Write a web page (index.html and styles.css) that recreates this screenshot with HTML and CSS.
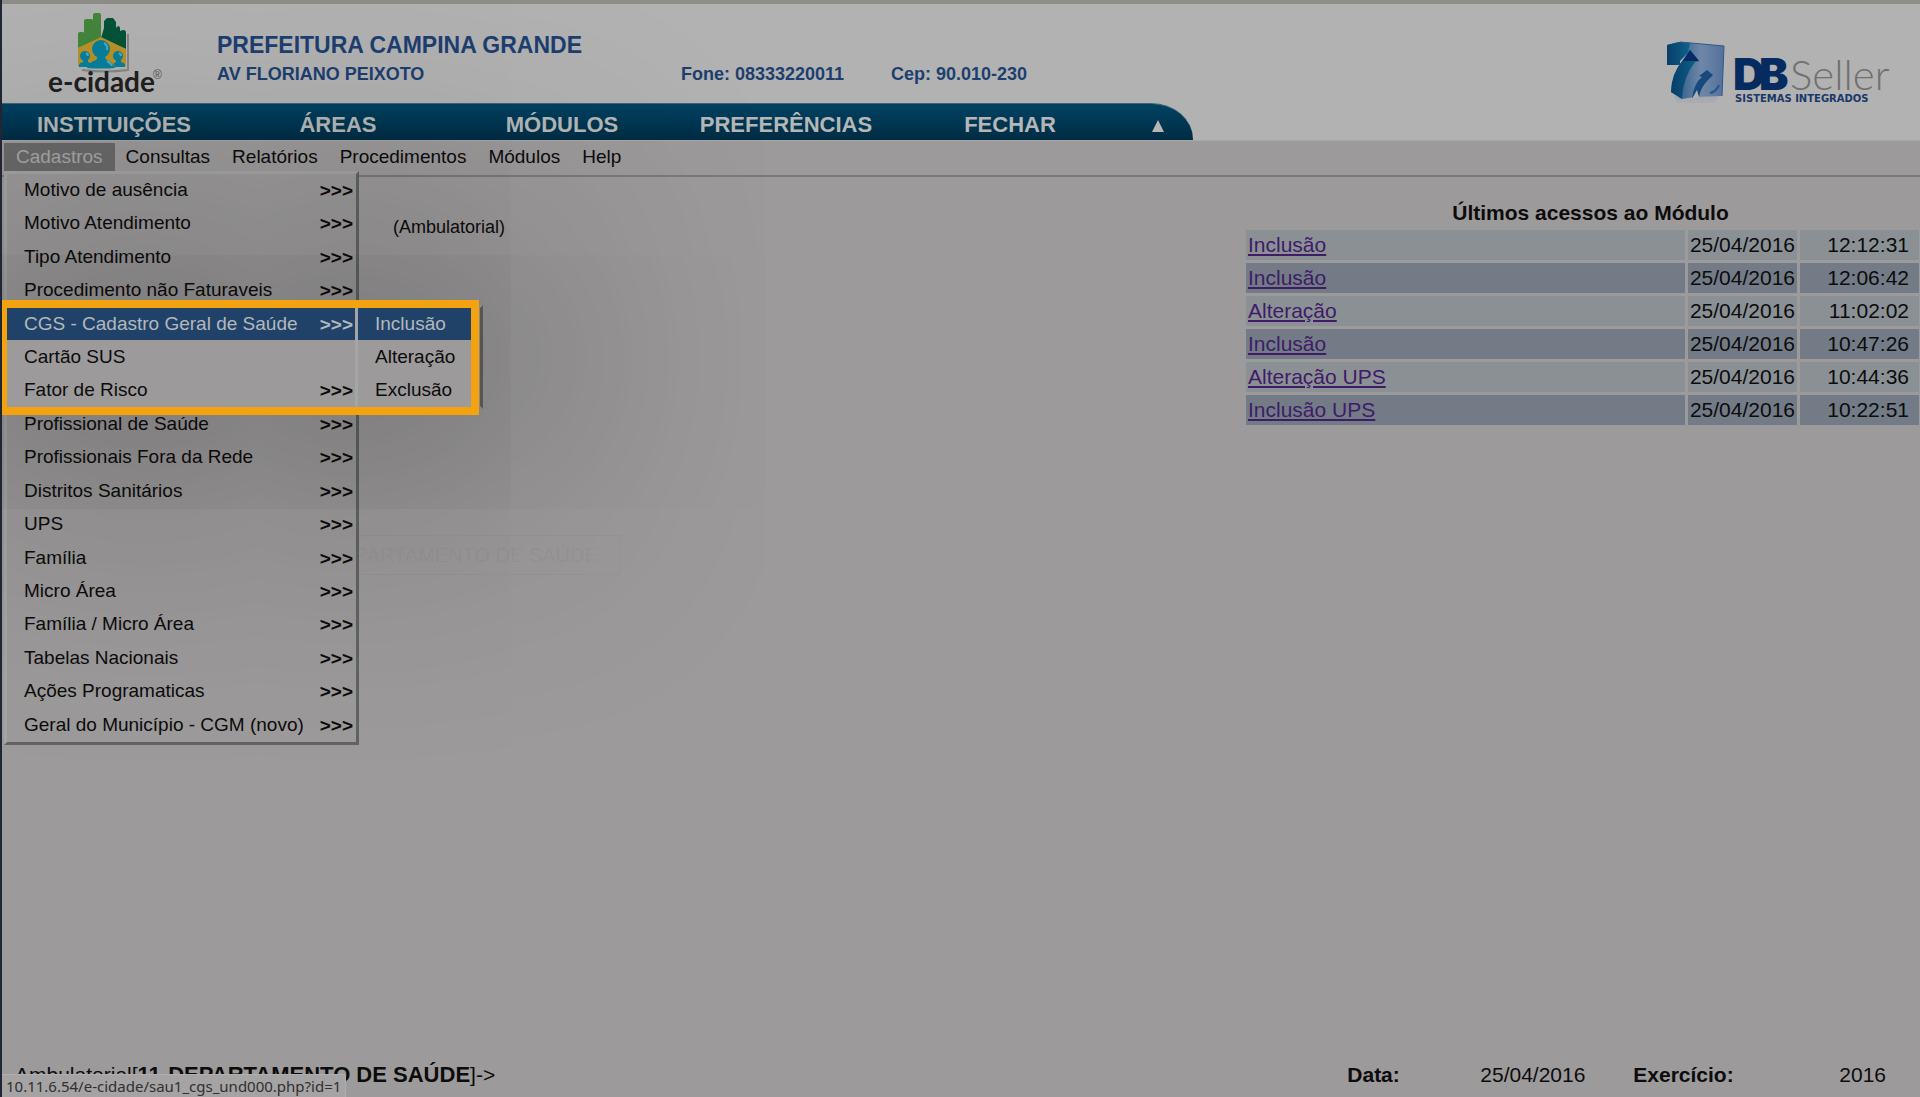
FILE: index.html
```html
<!DOCTYPE html>
<html lang="pt-BR">
<head>
<meta charset="utf-8">
<title>e-cidade</title>
<link rel="stylesheet" href="styles.css">
</head>
<body>
<header class="header">
  <svg class="logo" width="122" height="92" viewBox="0 0 122 92" role="img" aria-label="e-cidade">
    <path d="M34 60q24 3 46 0V24" fill="none" stroke="#55585a" stroke-width="2" opacity=".5"/>
    <path d="M53 28V5q0-2-2-2h-4q-2 0-2 2v5q0-1-2-1h-5q-2 0-2 2v12q0-1-2-1h-2q-2 0-2 2v14z" fill="#43863b"/>
    <path d="M53 28 56 18V11l3-3h6l3 4v6q3-4 4 0v3q6-3 6 2v16z" fill="#065338"/>
    <path d="M30 56V38l23-11 25 12v17q-24 4-48 0z" fill="#b99226"/>
    <g fill="#087f9d">
      <circle cx="53" cy="39" r="9"/>
      <path d="M39 58q2-6 9-8 2-2 1-5h9q-2 3 1 5 6 2 8 8-14 1-28 0z"/>
      <circle cx="37" cy="46" r="5"/>
      <path d="M31 57q-1-4 4-5v-4h5v4q4 1 2 5z"/>
      <circle cx="70" cy="46" r="5"/>
      <path d="M77 57q1-4-4-5v-4h-5v4q-4 1-1 5z"/>
    </g>
    <path d="M56 33q4 2 3 7M38 43q2 1 2 3M71 43q2 1 2 3M59 51q4 2 5 5" fill="none" stroke="#55a6bd" stroke-width="2"/>
    <text class="logo-name" x="0" y="82">e-cidade</text>
    <text class="logo-mark" x="105" y="69">®</text>
  </svg>
  <div class="entity">
    <h1 class="entity-name">PREFEITURA CAMPINA GRANDE</h1>
    <p class="entity-line"><span class="address">AV FLORIANO PEIXOTO</span><span class="phone">Fone: 08333220011</span><span>Cep: 90.010-230</span></p>
  </div>
  <svg class="vendor" width="228" height="76" viewBox="0 0 228 76" role="img" aria-label="DBSeller Sistemas Integrados">
    <defs>
      <linearGradient id="face" x1="0" y1="0" x2="1" y2="0"><stop offset="0" stop-color="#164c82"/><stop offset=".6" stop-color="#6f88a8"/><stop offset="1" stop-color="#54709a"/></linearGradient>
      <linearGradient id="side" x1="0" y1="0" x2="1" y2="0"><stop offset="0" stop-color="#073e69"/><stop offset="1" stop-color="#0e638a"/></linearGradient>
      <linearGradient id="fade" x1="0" y1="0" x2="0" y2="1"><stop offset="0" stop-color="#9ba2b0"/><stop offset="1" stop-color="#b2b2b2"/></linearGradient>
    </defs>
    <path d="M8 56h44l-4 10-10 2-4 4-20-2z" fill="url(#fade)" opacity=".6"/>
    <path d="M1 5 13 2 58 6 56 56 28 57 16 59 5 52Q6 38 14 24L1 25z" fill="url(#face)"/>
    <path d="M1 5 13 2 24 3 22 13 14 25 1 25z" fill="url(#side)"/>
    <path d="M14 24 17 20 22 13 14 21z" fill="#b2b2b2"/>
    <path d="M5 52Q5 34 17 20L24 10 33 21 29 22Q17 37 16 59z" fill="url(#side)"/>
    <path d="M17 21 24 10 33 21z" fill="#062a66"/>
    <path d="M26 59Q28 43 36 37L33 36 41 30 47 35 44 38Q35 46 33 57l-3-4z" fill="#17497c"/>
    <path d="M26 59 31 50 33 57z" fill="#b2b2b2"/>
    <path d="M44 53Q50 52 53 45" fill="none" stroke="#25568b" stroke-width="2"/>
    <path d="M14 2 58 6 56 56" fill="none" stroke="#315887"/>
    <text class="vendor-db" x="67" y="50">D</text>
    <text class="vendor-db" x="93" y="50">B</text>
    <text class="vendor-seller" x="124" y="50">Seller</text>
    <text class="vendor-tag" x="69" y="62">SISTEMAS INTEGRADOS</text>
  </svg>
</header>

<div class="navrow">
  <nav class="mainnav">
    <a href="#">INSTITUIÇÕES</a>
    <a href="#">ÁREAS</a>
    <a href="#">MÓDULOS</a>
    <a href="#">PREFERÊNCIAS</a>
    <a href="#">FECHAR</a>
    <button class="collapse" type="button" aria-label="Recolher"><svg width="12" height="12" viewBox="0 0 12 12"><path d="M6 0 12 12H0z" fill="#b5b7b7"/></svg></button>
  </nav>
</div>

<div class="menubar">
  <div class="menuhost">
    <button class="menubtn open" type="button">Cadastros</button>
    <ul class="dropdown">
      <li><a href="#">Motivo de ausência <b>&gt;&gt;&gt;</b></a></li>
      <li><a href="#">Motivo Atendimento <b>&gt;&gt;&gt;</b></a></li>
      <li><a href="#">Tipo Atendimento <b>&gt;&gt;&gt;</b></a></li>
      <li><a href="#">Procedimento não Faturaveis <b>&gt;&gt;&gt;</b></a></li>
      <li class="active"><a href="#">CGS - Cadastro Geral de Saúde <b>&gt;&gt;&gt;</b></a>
        <ul class="submenu">
          <li class="active"><a href="#">Inclusão</a></li>
          <li><a href="#">Alteração</a></li>
          <li><a href="#">Exclusão</a></li>
        </ul>
        <div class="highlight"></div>
      </li>
      <li><a href="#">Cartão SUS</a></li>
      <li><a href="#">Fator de Risco <b>&gt;&gt;&gt;</b></a></li>
      <li><a href="#">Profissional de Saúde <b>&gt;&gt;&gt;</b></a></li>
      <li><a href="#">Profissionais Fora da Rede <b>&gt;&gt;&gt;</b></a></li>
      <li><a href="#">Distritos Sanitários <b>&gt;&gt;&gt;</b></a></li>
      <li><a href="#">UPS <b>&gt;&gt;&gt;</b></a></li>
      <li><a href="#">Família <b>&gt;&gt;&gt;</b></a></li>
      <li><a href="#">Micro Área <b>&gt;&gt;&gt;</b></a></li>
      <li><a href="#">Família / Micro Área <b>&gt;&gt;&gt;</b></a></li>
      <li><a href="#">Tabelas Nacionais <b>&gt;&gt;&gt;</b></a></li>
      <li><a href="#">Ações Programaticas <b>&gt;&gt;&gt;</b></a></li>
      <li><a href="#">Geral do Município - CGM (novo) <b>&gt;&gt;&gt;</b></a></li>
    </ul>
  </div>
  <button class="menubtn" type="button">Consultas</button>
  <button class="menubtn" type="button">Relatórios</button>
  <button class="menubtn" type="button">Procedimentos</button>
  <button class="menubtn" type="button">Módulos</button>
  <button class="menubtn" type="button">Help</button>
</div>

<main class="content">
  <div>
    <p class="module">(Ambulatorial)</p>
    <select class="department" aria-label="Departamento"><option>DEPARTAMENTO DE SAÚDE</option></select>
  </div>
  <table class="recent">
    <caption>Últimos acessos ao Módulo</caption>
    <tbody>
      <tr><td><a href="#">Inclusão</a></td><td class="date">25/04/2016</td><td class="time">12:12:31</td></tr>
      <tr><td><a href="#">Inclusão</a></td><td class="date">25/04/2016</td><td class="time">12:06:42</td></tr>
      <tr><td><a href="#">Alteração</a></td><td class="date">25/04/2016</td><td class="time">11:02:02</td></tr>
      <tr><td><a href="#">Inclusão</a></td><td class="date">25/04/2016</td><td class="time">10:47:26</td></tr>
      <tr><td><a href="#">Alteração UPS</a></td><td class="date">25/04/2016</td><td class="time">10:44:36</td></tr>
      <tr><td><a href="#">Inclusão UPS</a></td><td class="date">25/04/2016</td><td class="time">10:22:51</td></tr>
    </tbody>
  </table>
</main>

<footer class="footer">
  <p class="path">Ambulatorial[<b>11-DEPARTAMENTO DE SAÚDE</b>]-&gt;</p>
  <b class="label-date">Data:</b><span class="value-date">25/04/2016</span>
  <b class="label-year">Exercício:</b><span>2016</span>
</footer>
<div class="status">10.11.6.54/e-cidade/sau1_cgs_und000.php?id=1</div>
</body>
</html>
```
FILE: styles.css
```css
* { box-sizing: border-box; }

body {
  margin: 0;
  min-height: 100vh;
  display: flex;
  flex-direction: column;
  overflow-x: hidden;
  border-left: 2px solid #202634;
  background: #9c9a9a;
  color: #0c0c0c;
  font: 21px/24px "Liberation Sans", Arial, sans-serif;
}

h1, p, ul { margin: 0; padding: 0; }
ul { list-style: none; }
a { color: inherit; text-decoration: none; }
button { font: inherit; color: inherit; border: 0; background: none; padding: 0; }
svg { overflow: visible; }

/* Header */
.header {
  display: flex;
  align-items: flex-start;
  height: 103px;
  padding: 6px 26px 0 46px;
  border-top: 4px solid #8e8d8a;
  background: #b2b2b2;
}
.logo-name { font: 700 28px Lato, sans-serif; fill: #202020; }
.logo-mark { font: 12px "Liberation Sans", sans-serif; fill: #555; }
.entity { flex: 1; padding: 22px 0 0 47px; color: #1d3f70; font-weight: bold; }
.entity-name { font-size: 23px; line-height: 26px; }
.entity-line { display: flex; margin-top: 4px; font-size: 18px; line-height: 24px; }
.address { width: 464px; }
.phone { width: 210px; }
.vendor { margin-top: 30px; }
.vendor-db { font: 900 44px Inter, sans-serif; fill: #062b60; }
.vendor-seller { font: 300 42px Lato, sans-serif; fill: #707070; }
.vendor-tag { font: bold 10px "DejaVu Sans", sans-serif; fill: #1a3866; }

/* Institution navigation */
.navrow { background: #b2b2b2; }
.mainnav {
  display: grid;
  grid-template-columns: repeat(5, 224px) 1fr;
  width: 1191px;
  height: 37px;
  padding-top: 8px;
  border-top: 1px solid #3d6478;
  border-top-right-radius: 42px 36px;
  background: linear-gradient(#004263, #002c43);
  color: #b5b7b7;
  font-weight: bold;
  font-size: 22px;
  line-height: 26px;
  text-align: center;
}
.collapse { display: flex; align-items: center; justify-content: center; }

/* Menu bar */
.menubar {
  position: relative;
  z-index: 1;
  display: flex;
  height: 37px;
  padding: 2px 0 0 2px;
  border-top: 1px solid #a6a9a9;
  border-bottom: 2px solid #7b7979;
  font-size: 19px;
}
.menuhost { position: relative; }
.menubtn { height: 28px; padding: 0 11px; line-height: 28px; }
.menubtn.open { padding: 0 12px; background: #6b6a6a; color: #a8a8a8; }

.dropdown {
  position: absolute;
  top: 28px;
  left: 0;
  width: 355px;
  height: 574px;
  display: grid;
  grid-auto-rows: 1fr;
  border: 3px solid;
  border-color: #a3a6a5 #626464 #626464 #a3a6a5;
  background: #9c9a9a;
}
.dropdown li { position: relative; }
.dropdown a {
  display: flex;
  justify-content: space-between;
  align-items: center;
  height: 32px;
  padding: 0 3px 0 17px;
  white-space: nowrap;
}
.dropdown b { padding-top: 2px; }
.dropdown .active > a { background: #214268; color: #b3b8bc; }
.submenu {
  position: absolute;
  top: -3px;
  left: 348px;
  z-index: 1;
  width: 128px;
  border: 3px solid;
  border-color: #a3a6a5 #626464 #9c9a9a #a3a6a5;
  background: #9c9a9a;
}
.submenu li + li { margin-top: 1px; }
.dropdown .submenu a { width: 113px; }
/* Marks the step being explained and dims what surrounds it */
.highlight {
  position: absolute;
  top: -8px;
  left: -8px;
  z-index: 2;
  width: 480px;
  height: 115px;
  border: 8px solid #f2a30f;
  box-shadow: 0 0 440px 90px rgba(0, 0, 0, .24);
  pointer-events: none;
}

/* Content */
.content { flex: 1; display: flex; justify-content: space-between; align-items: flex-start; }
.module { padding: 38px 0 0 391px; font-size: 18px; }
.department {
  display: block;
  height: 40px;
  margin: 296px 0 0 320px;
  padding: 0 22px 0 4px;
  appearance: none;
  border: 1px solid rgba(0, 0, 0, .03);
  background: none;
  color: rgba(0, 0, 0, .05);
  font: 20px "Liberation Sans", Arial, sans-serif;
}
.recent { width: 679px; margin-top: 22px; border-spacing: 3px; margin-right: -2px; line-height: 24px; }
.recent caption { padding-left: 16px; font-weight: bold; line-height: 28px; }
.recent td { height: 30px; padding: 3px 2px; background: #8b9095; }
.recent tr:nth-child(even) td { background: #727b86; }
.recent a { color: #3f1b68; text-decoration: underline; }
.recent .date { width: 109px; }
.recent .time { width: 119px; padding-right: 10px; text-align: right; }

/* Footer */
.footer { display: flex; padding: 0 34px 10px 13px; }
.path { flex: 1; }
.path b { font-size: 22px; }
.label-date { width: 133px; }
.value-date { width: 153px; }
.label-year { width: 206px; }
.status {
  position: fixed;
  left: 2px;
  bottom: 0;
  height: 23px;
  padding: 0 4px;
  border: solid #b0aeae;
  border-width: 1px 1px 0 0;
  border-top-right-radius: 3px;
  background: #a5a3a3;
  color: #303030;
  font: 15px/23px "Noto Sans", sans-serif;
}
```
